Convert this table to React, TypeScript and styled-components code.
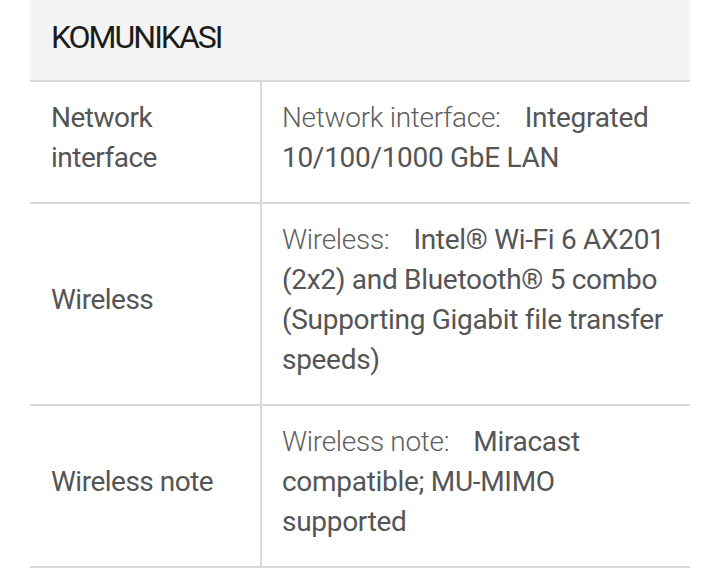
import React from "react";
import styled, { createGlobalStyle } from "styled-components";

const GlobalStyle = createGlobalStyle`
  html, body {
    margin: 0;
    padding: 0;
    background: #ffffff;
  }
  body {
    font-family: Roboto, "Noto Sans", sans-serif;
  }
`;

const Table = styled.section`
  margin-left: 30px;
  width: 660px;
`;

const Header = styled.h2`
  margin: 0;
  background: #f4f4f4;
  border-bottom: 2px solid #d9d9d9;
  padding: 19px 21px 25px;
  font-size: 32px;
  line-height: 36px;
  font-weight: 400;
  letter-spacing: -2px;
  color: #1b1b1b;
`;

const Row = styled.div`
  display: grid;
  grid-template-columns: 232px 1fr;
  border-bottom: 2px solid #d9d9d9;
`;

const Label = styled.div`
  display: flex;
  align-items: center;
  padding: 16px 21px 24px;
  border-right: 2px solid #d9d9d9;
  font-size: 28px;
  line-height: 40px;
  letter-spacing: -0.5px;
  color: #555555;
`;

const Value = styled.div`
  padding: 16px 20px 24px 20px;
  font-size: 28px;
  line-height: 40px;
  letter-spacing: -0.3px;
  color: #555555;
`;

const Name = styled.span`
  font-weight: 300;
  color: #606060;
  margin-right: 24px;
`;

const Data = styled.span`
  font-weight: 400;
`;

type Spec = { label: React.ReactNode; name: string; value: string };

const specs: Spec[] = [
  {
    label: (
      <>
        Network
        <br />
        interface
      </>
    ),
    name: "Network interface:",
    value: "Integrated 10/100/1000 GbE LAN",
  },
  {
    label: "Wireless",
    name: "Wireless:",
    value:
      "Intel® Wi-Fi 6 AX201 (2x2) and Bluetooth® 5 combo (Supporting Gigabit file transfer speeds)",
  },
  {
    label: "Wireless note",
    name: "Wireless note:",
    value: "Miracast compatible; MU-MIMO supported",
  },
];

export default function App() {
  return (
    <>
      <GlobalStyle />
      <Table>
        <Header>KOMUNIKASI</Header>
        {specs.map((s) => (
          <Row key={s.name}>
            <Label>{s.label}</Label>
            <Value>
              <Name>{s.name}</Name>
              <Data>{s.value}</Data>
            </Value>
          </Row>
        ))}
      </Table>
    </>
  );
}
